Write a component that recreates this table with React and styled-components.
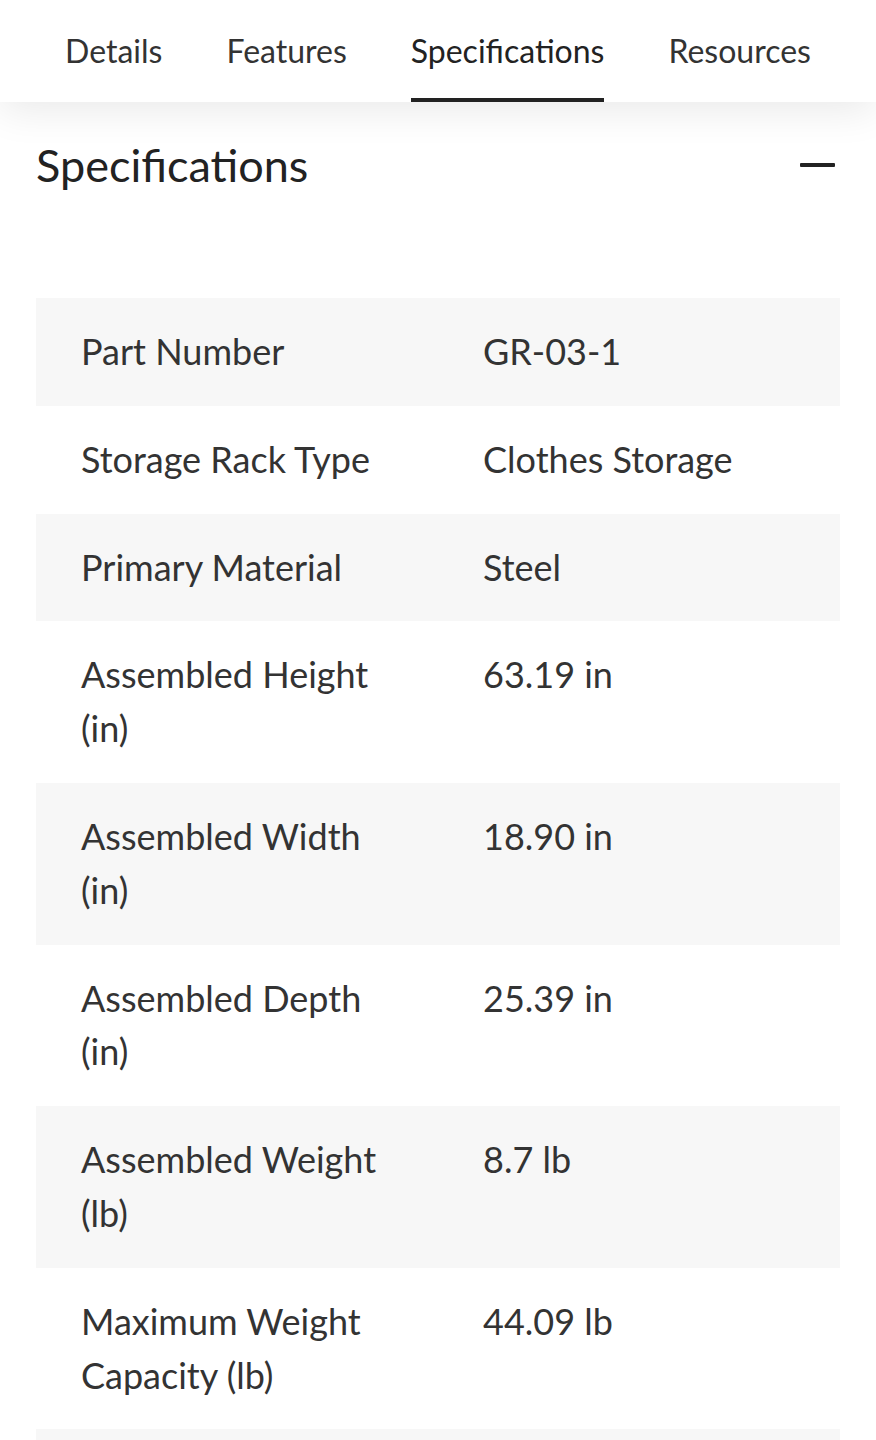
import React from "react";
import styled, { createGlobalStyle } from "styled-components";

const Global = createGlobalStyle`
  body {
    margin: 0;
    background: #fff;
    font-family: Lato, "Open Sans", sans-serif;
    color: #333;
  }
`;

const tabs = ["Details", "Features", "Specifications", "Resources"];

const specs = [
  ["Part Number", "GR-03-1"],
  ["Storage Rack Type", "Clothes Storage"],
  ["Primary Material", "Steel"],
  ["Assembled Height (in)", "63.19 in"],
  ["Assembled Width (in)", "18.90 in"],
  ["Assembled Depth (in)", "25.39 in"],
  ["Assembled Weight (lb)", "8.7 lb"],
  ["Maximum Weight Capacity (lb)", "44.09 lb"],
];

export default function App() {
  return (
    <Page>
      <Global />
      <TabBar>
        {tabs.map((t) => (
          <Tab key={t} active={t === "Specifications"}>
            {t}
          </Tab>
        ))}
      </TabBar>
      <Section>
        <Header>
          <Title>Specifications</Title>
          <Minus />
        </Header>
        <Table>
          {specs.map(([label, value], i) => (
            <Row key={label} shaded={i % 2 === 0}>
              <Cell>{label}</Cell>
              <Cell>{value}</Cell>
            </Row>
          ))}
          <Row shaded>
            <Cell />
            <Cell />
          </Row>
        </Table>
      </Section>
    </Page>
  );
}

const Page = styled.div`
  width: 876px;
  height: 1440px;
  overflow: hidden;
`;

const TabBar = styled.nav`
  position: relative;
  z-index: 1;
  height: 102px;
  display: flex;
  justify-content: center;
  gap: 64px;
  background: #fff;
  box-shadow: 0 8px 40px rgba(0, 0, 0, 0.09);
`;

const Tab = styled.div`
  height: 102px;
  box-sizing: border-box;
  display: flex;
  align-items: center;
  padding-top: 2px;
  font-size: 32px;
  color: ${(p) => (p.active ? "#222" : "#333")};
  border-bottom: 4px solid ${(p) => (p.active ? "#222" : "transparent")};
`;

const Section = styled.section`
  padding: 0 36px;
`;

const Header = styled.div`
  display: flex;
  align-items: center;
  justify-content: space-between;
  margin-top: 39px;
  height: 48px;
`;

const Title = styled.h2`
  margin: 0;
  font-size: 45px;
  font-weight: 400;
  line-height: 48px;
  color: #222;
`;

const Minus = styled.span`
  width: 35px;
  height: 4px;
  margin-right: 5px;
  background: #222;
  border-radius: 1px;
`;

const Table = styled.div`
  margin-top: 109px;
  width: 804px;
`;

const Row = styled.div`
  display: grid;
  grid-template-columns: 1fr 1fr;
  min-height: 107.8px;
  background: ${(p) => (p.shaded ? "#f7f7f7" : "#fff")};
`;

const Cell = styled.div`
  padding: 27px 45px;
  font-size: 36px;
  line-height: 53.8px;
  color: #333;
`;
